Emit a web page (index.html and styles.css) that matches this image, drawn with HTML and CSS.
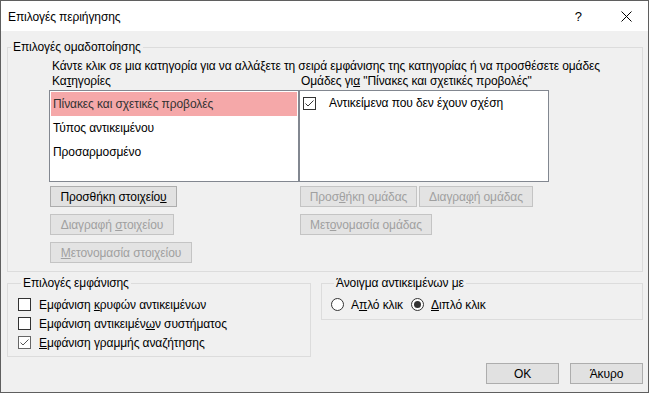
FILE: index.html
```html
<!DOCTYPE html>
<html lang="el">
<head>
  <meta charset="UTF-8">
  <title>Επιλογές περιήγησης</title>
  <link rel="stylesheet" href="styles.css">
</head>
<body>
  <div class="window">
    <div class="titlebar">
      <span class="title">Επιλογές περιήγησης</span>
      <span class="help">?</span>
      <span class="close">
        <svg width="11" height="11" viewBox="0 0 11 11">
          <path d="M0.5 0.5 L10.5 10.5 M10.5 0.5 L0.5 10.5" stroke="#000" stroke-width="1" fill="none"/>
        </svg>
      </span>
    </div>

    <div class="content">
      <fieldset class="group group-main">
        <legend>Επιλογές ομαδοποίησης</legend>
        <div class="grouping">
          <div class="hint">Κάντε κλικ σε μια κατηγορία για να αλλάξετε τη σειρά εμφάνισης της κατηγορίας ή να προσθέσετε ομάδες</div>
          <div class="columns">
            <div class="col">
              <div class="col-label">Κα<u>τ</u>ηγορίες</div>
              <div class="listbox">
                <div class="item selected">Πίνακες και σχετικές προβολές</div>
                <div class="item">Τύπος αντικειμένου</div>
                <div class="item">Προσαρμοσμένο</div>
              </div>
              <div class="btn-stack">
                <div class="btn" style="width: 127px"><span>Προσθήκη στοιχείο<u>υ</u></span></div>
                <div class="btn disabled" style="width: 124px"><span>Διαγραφή <u>σ</u>τοιχείου</span></div>
                <div class="btn disabled" style="width: 142px"><span><u>Μ</u>ετονομασία στοιχείου</span></div>
              </div>
            </div>
            <div class="col col-right">
              <div class="col-label">Ομάδες γι<u>α</u> "Πίνακες και σχετικές προβολές"</div>
              <div class="listbox">
                <div class="check-item">
                  <span class="checkbox">
                    <svg width="11" height="11" viewBox="0 0 11 11"><polyline points="1.5,5.5 4,8 9.5,2.5" fill="none" stroke="#333" stroke-width="1"/></svg>
                  </span>
                  <span>Αντικείμενα που δεν έχουν σχέση</span>
                </div>
              </div>
              <div class="btn-stack">
                <div class="btn-row">
                  <div class="btn disabled" style="width: 117px"><span>Προσ<u>θ</u>ήκη ομάδας</span></div>
                  <div class="btn disabled" style="width: 114px"><span>Διαγρα<u>φ</u>ή ομάδας</span></div>
                </div>
                <div class="btn disabled" style="width: 132px"><span>Μετ<u>ο</u>νομασία ομάδας</span></div>
              </div>
            </div>
          </div>
        </div>
      </fieldset>

      <div class="lower">
        <fieldset class="group group-display">
          <legend>Επιλογές εμφάνισης</legend>
          <div class="option">
            <span class="checkbox"></span>
            <span>Εμφάνιση <u>κ</u>ρυφών αντικειμένων</span>
          </div>
          <div class="option">
            <span class="checkbox"></span>
            <span>Εμφάνιση αντικειμέν<u>ω</u>ν συστήματος</span>
          </div>
          <div class="option">
            <span class="checkbox soft">
              <svg width="11" height="11" viewBox="0 0 11 11"><polyline points="1.5,5.5 4,8 9.5,2.5" fill="none" stroke="#555" stroke-width="1"/></svg>
            </span>
            <span><u>Ε</u>μφάνιση γραμμής αναζήτησης</span>
          </div>
        </fieldset>

        <fieldset class="group group-open">
          <legend>Άνοιγμα αντικειμένων με</legend>
          <div class="radios">
            <div class="radio-opt first"><span class="radio"></span><span>Α<u>π</u>λό κλικ</span></div>
            <div class="radio-opt"><span class="radio checked"></span><span><u>Δ</u>ιπλό κλικ</span></div>
          </div>
        </fieldset>
      </div>

      <div class="footer">
        <div class="btn dialog-btn"><span>OK</span></div>
        <div class="btn dialog-btn"><span>Άκυρο</span></div>
      </div>
    </div>
  </div>
</body>
</html>
```

FILE: styles.css
```css
* {
  box-sizing: border-box;
}

body {
  margin: 0;
  font-family: "Liberation Sans", Arial, sans-serif;
  font-size: 12px;
  letter-spacing: -0.09px;
  color: #000;
}

.window {
  width: 649px;
  height: 393px;
  border: 1px solid #5f5f5f;
  background: #f0f0f0;
  display: flex;
  flex-direction: column;
}

.titlebar {
  height: 30px;
  background: #fff;
  display: flex;
  align-items: center;
  padding-left: 7px;
}

.title {
  flex: 1;
  margin-top: 1px;
}

.help {
  font-size: 13px;
  margin-right: 39px;
}

.close {
  display: flex;
  margin-right: 16px;
  margin-top: 1px;
}

.content {
  flex: 1;
  display: flex;
  flex-direction: column;
  padding: 0 5px 8px 6px;
}

.group {
  margin: 0;
  padding: 0;
  min-width: 0;
  border: 1px solid #dcdcdc;
}

.group legend {
  padding: 0 2px;
  margin-left: 3px;
  line-height: 15px;
}

.group-main {
  margin-top: 9px;
  padding-bottom: 8px;
}

.grouping {
  margin-left: 41px;
  margin-top: 4px;
}

.hint {
  line-height: 15px;
  padding-left: 3px;
}

.columns {
  display: grid;
  grid-template-columns: 250px 250px;
}

.col-label {
  line-height: 15px;
  padding-left: 3px;
  white-space: nowrap;
}

.col-right .col-label {
  padding-left: 2px;
}

.listbox {
  height: 92px;
  margin-top: 1px;
  border: 1px solid #828790;
  background: #fff;
  padding: 1px;
}

.item {
  height: 24px;
  line-height: 24px;
  padding-left: 2px;
}

.item.selected {
  background: #f5a8a9;
  color: #333;
}

.check-item {
  display: flex;
  align-items: center;
  height: 22px;
  padding-left: 2px;
}

.check-item .checkbox {
  margin-right: 13px;
}

.checkbox {
  width: 13px;
  height: 13px;
  border: 1px solid #333;
  background: #fff;
  display: inline-flex;
  align-items: center;
  justify-content: center;
  flex-shrink: 0;
}

.checkbox.soft {
  border-color: #666;
}

.btn-stack {
  display: flex;
  flex-direction: column;
  align-items: flex-start;
  gap: 7px;
  margin-top: 4px;
  padding-left: 1px;
}

.btn-row {
  display: flex;
  gap: 2px;
}

.btn {
  height: 21px;
  background: #e1e1e1;
  border: 1px solid #adadad;
  display: flex;
  align-items: center;
  justify-content: center;
  white-space: nowrap;
}

.btn.disabled {
  color: #a0a0a0;
  border-color: #c4c4c4;
  background: #e3e3e3;
}

.lower {
  display: flex;
  align-items: flex-start;
  gap: 10px;
  margin-top: 4px;
}

.group-display {
  width: 304px;
  padding: 4px 0 4px 10px;
}

.option {
  display: flex;
  align-items: center;
  height: 19px;
}

.option .checkbox {
  margin-right: 8px;
}

.group-open {
  flex: 1;
  padding: 4px 0 5px 9px;
}

.radios {
  display: flex;
  height: 19px;
  align-items: center;
}

.radio-opt {
  display: flex;
  align-items: center;
}

.radio-opt.first {
  width: 80px;
}

.radio {
  width: 13px;
  height: 13px;
  border: 1px solid #333;
  border-radius: 50%;
  background: #fff;
  margin-right: 7px;
  display: flex;
  align-items: center;
  justify-content: center;
}

.radio.checked::after {
  content: "";
  width: 7px;
  height: 7px;
  border-radius: 50%;
  background: #333;
}

.footer {
  margin-top: auto;
  display: flex;
  justify-content: flex-end;
  gap: 11px;
}

.dialog-btn {
  width: 73px;
}
```
